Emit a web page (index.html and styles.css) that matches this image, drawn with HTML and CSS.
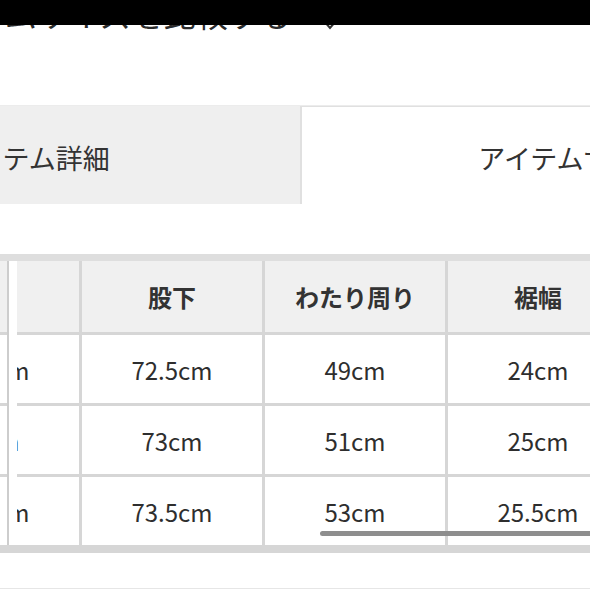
FILE: index.html
```html
<!DOCTYPE html>
<html lang="ja">
<head>
<meta charset="utf-8">
<link rel="stylesheet" href="styles.css">
</head>
<body>
<div class="topbar"></div>
<div class="page">
  <h2 class="title">アイテムサイズを比較する
    <svg class="chev" width="16" height="10" viewBox="0 0 16 10"><path d="M2 1 L8 8 L14 1" fill="none" stroke="#333" stroke-width="2"/></svg>
  </h2>

  <div class="tabs">
    <div class="tab tab-off">アイテム詳細</div>
    <div class="tab tab-on">アイテムサイズ</div>
  </div>

  <div class="table-wrap">
    <div class="sticky">
      <div class="scell head"></div>
      <div class="scell"></div>
      <div class="scell"></div>
      <div class="scell"></div>
    </div>
    <div class="spacer"></div>
    <div class="clip">
      <div class="grid">
        <div class="cell head">股上</div>
        <div class="cell head">股下</div>
        <div class="cell head">わたり周り</div>
        <div class="cell head">裾幅</div>

        <div class="cell">28.5cm</div>
        <div class="cell">72.5cm</div>
        <div class="cell">49cm</div>
        <div class="cell">24cm</div>

        <div class="cell">29cm</div>
        <div class="cell">73cm</div>
        <div class="cell">51cm</div>
        <div class="cell">25cm</div>

        <div class="cell">29.5cm</div>
        <div class="cell">73.5cm</div>
        <div class="cell">53cm</div>
        <div class="cell">25.5cm</div>
      </div>
    </div>
    <div class="scrollbar"></div>
  </div>

  <div class="rule"></div>
</div>
</body>
</html>
```

FILE: styles.css
```css
html, body {
  margin: 0;
  padding: 0;
  background: #fff;
  overflow: hidden;
}
body {
  width: 590px;
  height: 590px;
  font-family: "Noto Sans CJK JP", "Noto Sans", sans-serif;
  color: #333;
  position: relative;
}
.topbar {
  position: absolute;
  left: 0;
  top: 0;
  width: 590px;
  height: 25px;
  background: #000;
  z-index: 5;
}
.page {
  width: 590px;
}
.title {
  margin: -3px 0 0 -88px;
  height: 32px;
  font-size: 32px;
  line-height: 32px;
  font-weight: normal;
  color: #2a2a2a;
  white-space: nowrap;
  display: flex;
  align-items: center;
}
.chev {
  margin-left: 30px;
  margin-top: 24px;
}
.tabs {
  margin-top: 76px;
  margin-left: -240px;
  display: flex;
  border-top: 1px solid #ececec;
  width: 1080px;
}
.tab {
  width: 540px;
  height: 98px;
  box-sizing: border-box;
  display: flex;
  align-items: center;
  justify-content: center;
  font-size: 27px;
  color: #333;
  padding-top: 4px;
  white-space: nowrap;
}
.tab-off {
  background: #efefef;
}
.tab-on {
  background: #fff;
  border-left: 2px solid #e0e0e0;
  border-top: 1px solid #e0e0e0;
}
.table-wrap {
  margin-top: 50px;
  position: relative;
  display: flex;
  border-top: 7px solid #dedede;
  border-bottom: 8px solid #d6d6d6;
}
.sticky {
  width: 7px;
  display: grid;
  grid-template-rows: 71px 68px 68px 68px;
  row-gap: 3px;
  background: #d6d6d6;
  border-right: 2px solid #cdcdcd;
}
.scell {
  background: #fff;
}
.scell.head {
  background: #f0f0f0;
}
.spacer {
  width: 8px;
  background: #fff;
}
.clip {
  flex: 1;
  overflow: hidden;
}
.grid {
  margin-left: -118px;
  display: grid;
  grid-template-columns: repeat(4, 180px);
  grid-template-rows: 71px 68px 68px 68px;
  gap: 3px;
  background: #d6d6d6;
  width: 729px;
}
.cell {
  background: #fff;
  display: flex;
  align-items: center;
  justify-content: center;
  font-size: 24px;
  color: #2e2e2e;
  white-space: nowrap;
}
.cell.head {
  background: #f0f0f0;
  font-weight: bold;
  color: #333;
}
.scrollbar {
  position: absolute;
  left: 320px;
  bottom: 9px;
  width: 290px;
  height: 5px;
  border-radius: 3px;
  background: #8e8e8e;
}
.rule {
  margin-top: 35px;
  height: 1px;
  background: #e6e6e6;
}
```
